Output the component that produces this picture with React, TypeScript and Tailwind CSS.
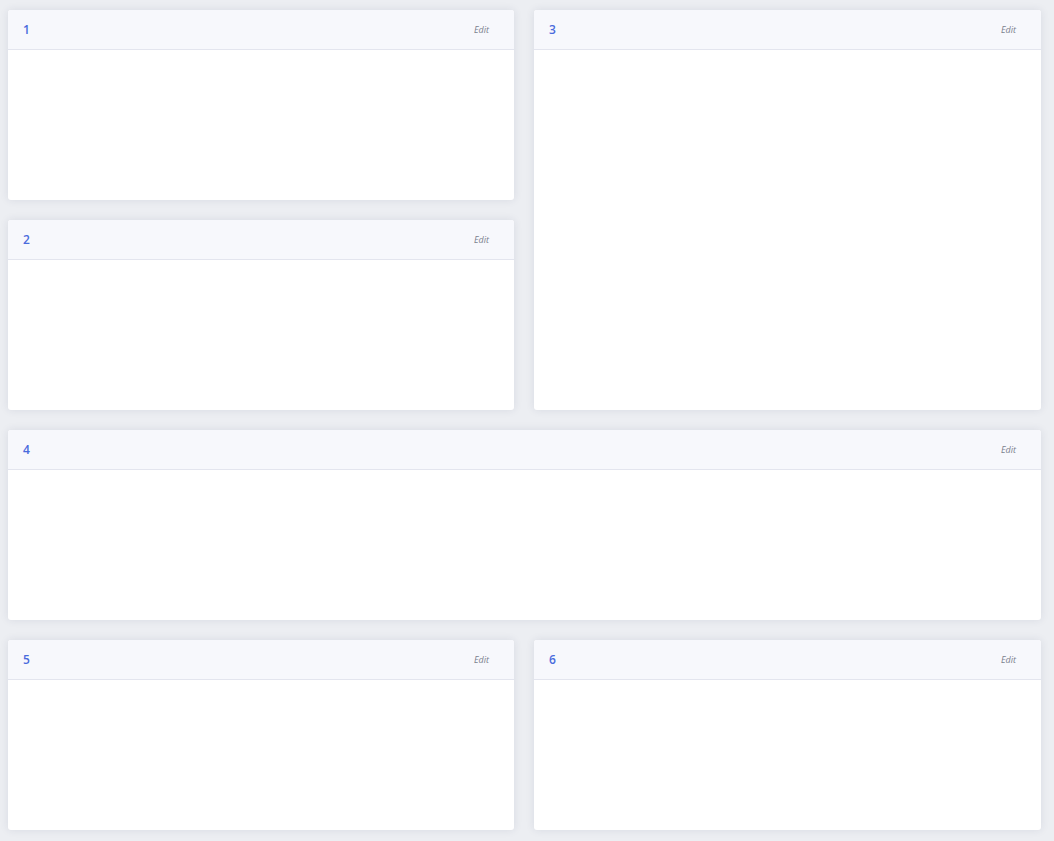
import React from "react";

type Card = { id: string; area: string };

const cards: Card[] = [
  { id: "1", area: "col-start-1 row-start-1" },
  { id: "2", area: "col-start-1 row-start-2" },
  { id: "3", area: "col-start-2 row-start-1 row-span-2" },
  { id: "4", area: "col-span-2 row-start-3" },
  { id: "5", area: "col-start-1 row-start-4" },
  { id: "6", area: "col-start-2 row-start-4" },
];

function Widget({ id, area }: Card) {
  return (
    <div
      className={`${area} flex flex-col bg-white rounded-[3px] overflow-hidden shadow-[0_0_8px_rgba(40,50,90,0.10)]`}
    >
      <div className="h-10 flex-shrink-0 flex items-center justify-between pl-[15px] pr-[25px] bg-[#f7f8fc] border-b border-[#e3e5ee]">
        <span className="text-[12px] font-semibold text-[#4a6bdc]">{id}</span>
        <span className="text-[9px] italic text-[#7b7f8c]">Edit</span>
      </div>
      <div className="flex-1" />
    </div>
  );
}

export default function App() {
  return (
    <div
      className="min-h-screen bg-[#eceef2] pt-[10px] pb-[11px] pl-[8px] pr-[13px]"
      style={{ fontFamily: '"Open Sans", "Noto Sans", sans-serif' }}
    >
      <div className="grid grid-cols-[506px_507px] grid-rows-[repeat(4,190px)] gap-x-5 gap-y-5">
        {cards.map((c) => (
          <Widget key={c.id} {...c} />
        ))}
      </div>
    </div>
  );
}
